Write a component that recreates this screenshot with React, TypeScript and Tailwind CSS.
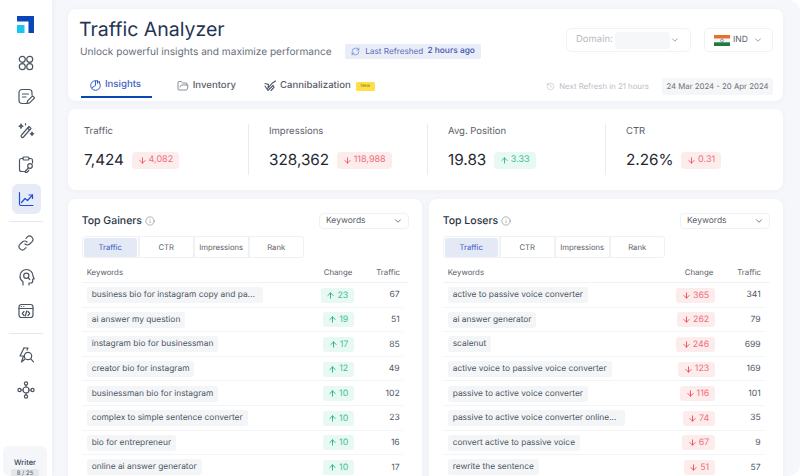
import React from "react";
import { ArrowUp, ArrowDown, ChevronDown, Info, History, RefreshCw, FolderOpen } from "lucide-react";

const S = ({ children, c = "#4b5563", w = 1.2, size = 20 }: { children: React.ReactNode; c?: string; w?: number; size?: number }) => (
  <svg width={size} height={size} viewBox="0 0 20 20" fill="none" stroke={c} strokeWidth={w} strokeLinecap="round" strokeLinejoin="round">
    {children}
  </svg>
);

const Logo = () => (
  <svg width="17" height="17" viewBox="0 0 17 17">
    <path d="M0 0H17V17H11.5V5.5H0Z" fill="#0b46b8" />
    <rect x="0" y="9" width="7.5" height="8" fill="#15c8f2" />
  </svg>
);

const navA = [
  <S key="a"><circle cx="6.3" cy="6.3" r="3" /><circle cx="13.7" cy="6.3" r="3" /><circle cx="6.3" cy="13.7" r="3" /><circle cx="13.7" cy="13.7" r="3" /></S>,
  <S key="b"><path d="M11 16.5H6a3 3 0 0 1-3-3v-8a3 3 0 0 1 3-3h7a3 3 0 0 1 3 3v2.5" /><path d="M6.5 7h6M6.5 10h3.5" /><path d="M11 16.5l.6-2.6 5-5 2 2-5 5z" /></S>,
  <S key="c"><path d="M13 5.5l2 2L7.5 16a1.4 1.4 0 0 1-2-2z" /><path d="M11.5 7l2 2" /><path d="M5 3l.6 1.6L7 5.2l-1.4.6L5 7.4l-.6-1.6L3 5.2l1.4-.6zM16 11l.5 1.3 1.3.5-1.3.5-.5 1.3-.5-1.3-1.3-.5 1.3-.5zM9.5 2.5v1.5" /></S>,
  <S key="d"><path d="M7 3.5H5.5a2 2 0 0 0-2 2v9a2 2 0 0 0 2 2H9" /><path d="M13 3.5h1.5a2 2 0 0 1 2 2V8" /><rect x="7" y="2" width="6" height="3" rx="1" /><circle cx="14" cy="11" r="2.3" /><path d="M12.5 12.8L9.5 16l-.1 1.5H11l.4-1 1-.4.4-1" /></S>,
];
const navB = [
  <S key="e"><path d="M9 11a3.3 3.3 0 0 0 4.7 0l2.2-2.2a3.3 3.3 0 0 0-4.7-4.7l-1.2 1.2" /><path d="M11 9a3.3 3.3 0 0 0-4.7 0L4.1 11.2a3.3 3.3 0 0 0 4.7 4.7l1.2-1.2" /></S>,
  <S key="f"><path d="M7 18v-3.2A6.7 6.7 0 0 1 4 9a6.5 6.5 0 0 1 13 0l1.2 3h-1.5v2a2 2 0 0 1-2 2H13v2" /><circle cx="10.3" cy="8.8" r="2.6" /><path d="M12.2 10.8l1.6 1.7" /></S>,
  <S key="g"><rect x="3" y="3.5" width="14" height="13" rx="2.5" /><path d="M3 7.5h14M5.4 5.5h.1M7.8 5.5h.1" /><path d="M8 10.5L6.3 12.5l1.7 2M12 10.5l1.7 2-1.7 2M10.7 10l-1.4 5" /></S>,
];
const navC = [
  <S key="h"><path d="M8 2L4 10h3.5l-2 6 3-2.5" /><path d="M8 2h4l-1 2" /><circle cx="12" cy="10" r="3.7" /><path d="M14.8 12.8l2.7 3" /></S>,
  <S key="i"><circle cx="10" cy="10" r="3" /><circle cx="10" cy="3.5" r="1.6" /><circle cx="10" cy="16.5" r="1.6" /><circle cx="3.5" cy="10" r="1.6" /><circle cx="16.5" cy="10" r="1.6" /><path d="M10 5.1V7M10 13v1.9M5.1 10H7M13 10h1.9" /></S>,
];

const NavItem = ({ children }: { children: React.ReactNode }) => (
  <div className="w-[29px] h-[30px] shrink-0 flex items-center justify-center">{children}</div>
);

const Sidebar = () => (
  <aside className="w-[52px] shrink-0 bg-white flex flex-col items-center shadow-[1px_0_4px_rgba(30,50,100,0.05)] overflow-hidden">
    <div className="mt-[16px] h-[17px] shrink-0 mr-[1px]"><Logo /></div>
    <div className="mt-[15px] shrink-0 flex flex-col gap-[4px] items-center">{navA.map((n, i) => <NavItem key={i}>{n}</NavItem>)}</div>
    <div className="mt-[4px] shrink-0 w-[29px] h-[30px] rounded-[6px] bg-[#e6ebf7] flex items-center justify-center">
      <S c="#1d4ed8"><path d="M3.5 3.5v11.5a1.5 1.5 0 0 0 1.5 1.5h12" /><path d="M5.5 13.5l3.5-4 2.5 2 5-5.5" /><path d="M13 6h3.5v3.5" /></S>
    </div>
    <div className="mt-[7px] shrink-0 w-[34px] h-px bg-[#e5e7eb]" />
    <div className="mt-[6px] shrink-0 flex flex-col gap-[4px] items-center">{navB.map((n, i) => <NavItem key={i}>{n}</NavItem>)}</div>
    <div className="mt-[7px] shrink-0 w-[34px] h-px bg-[#e5e7eb]" />
    <div className="mt-[7px] shrink-0 flex flex-col gap-[4px] items-center">{navC.map((n, i) => <NavItem key={i}>{n}</NavItem>)}</div>
    <div className="mt-[41px] w-[44px] ml-[-2px] h-[60px] shrink-0 rounded-[6px] bg-[#f4f6fa] flex flex-col items-center pt-[12px]">
      <span className="text-[7.5px] leading-[10px] font-medium text-[#374151]">Writer</span>
      <span className="mt-[1px] px-[6px] h-[10px] rounded-[2px] bg-[#e5e7eb] text-[6px] leading-[10px] text-[#4b5563]">8 / 25</span>
    </div>
  </aside>
);

const Badge = ({ up, v }: { up?: boolean; v: string }) => (
  <span className={`inline-flex items-center rounded-[4px] h-[17px] gap-[2px] px-[6px] text-[9px] ${up ? "bg-[#e8f8f2] text-[#3fbf97]" : "bg-[#fdecec] text-[#ee6f7c]"}`}>
    {up ? <ArrowUp size={9} strokeWidth={2.2} color="#14b07f" /> : <ArrowDown size={9} strokeWidth={2.2} color="#ef4458" />}
    {v}
  </span>
);

const Metric = ({ label, value, up, delta, cls, border = true }: { label: string; value: string; up?: boolean; delta: string; cls: string; border?: boolean }) => (
  <div className={`${cls} ${border ? "border-r border-[#e9ebef]" : ""} h-[51px] flex flex-col`}>
    <div className="mt-[1px] text-[9.5px] leading-[14px] text-[#5b6068]">{label}</div>
    <div className="flex items-center gap-[7.5px] mt-[11px]">
      <span className="text-[15.3px] leading-[20px] text-[#1f2733]">{value}</span>
      <Badge up={up} v={delta} />
    </div>
  </div>
);

type Row = [string, string, string];
const gain: Row[] = [
  ["business bio for instagram copy and pa...", "23", "67"],
  ["ai answer my question", "19", "51"],
  ["instagram bio for businessman", "17", "85"],
  ["creator bio for instagram", "12", "49"],
  ["businessman bio for instagram", "10", "102"],
  ["complex to simple sentence converter", "10", "23"],
  ["bio for entrepreneur", "10", "16"],
  ["online ai answer generator", "10", "17"],
];
const lose: Row[] = [
  ["active to passive voice converter", "365", "341"],
  ["ai answer generator", "262", "79"],
  ["scalenut", "246", "699"],
  ["active voice to passive voice converter", "123", "169"],
  ["passive to active voice converter", "116", "101"],
  ["passive to active voice converter online...", "74", "35"],
  ["convert active to passive voice", "67", "9"],
  ["rewrite the sentence", "51", "57"],
];

const Panel = ({ title, rows, up }: { title: string; rows: Row[]; up?: boolean }) => (
  <section className="w-[354px] bg-white rounded-t-[8px] shadow-[0_1px_6px_rgba(30,50,100,0.04)] pl-[13.7px] pr-[13px] pt-[12px]">
    <div className="flex items-center justify-between h-[19px]">
      <div className="flex items-center gap-[3px] text-[#2a3344] text-[10.5px] font-medium">
        {title}
        <Info size={10} strokeWidth={1.3} color="#6b7280" />
      </div>
      <div className="w-[90px] h-[16px] rounded-[4px] border border-[#f0f1f4] flex items-center justify-between pl-[6px] pr-[5px] text-[8.5px] leading-[15px] text-[#5b6068]">
        <span className="pt-[1px]">Keywords</span>
        <ChevronDown size={10} strokeWidth={1.8} color="#4b5563" />
      </div>
    </div>
    <div className="mt-[6px] w-[222px] h-[22px] border border-[#f0f1f4] rounded-[3px] grid grid-cols-4 text-[7.7px] text-[#5b6068] text-center">
      <div className="m-[1px] rounded-[2px] bg-[#e4e9f6] text-[#3b5cc4] leading-[19px]">Traffic</div>
      <div className="border-l-2 border-[#f0f1f4] leading-[21px]">CTR</div>
      <div className="border-l-2 border-[#f0f1f4] leading-[21px]">Impressions</div>
      <div className="border-l-2 border-[#f0f1f4] leading-[21px]">Rank</div>
    </div>
    <div className="h-[25px] flex items-center pt-[5px] text-[7.8px] text-[#5b6068] border-b border-[#f0f1f4] pl-[5px] pr-[9px]">
      <span className="flex-1">Keywords</span>
      <span className="w-[46px] text-center mr-[7px]">Change</span>
      <span className="w-[32px] text-right">Traffic</span>
    </div>
    <div className="mr-[6.3px]">
      {rows.map((r) => (
        <div key={r[0]} className="h-[24.6px] flex items-center border-b border-[#f3f4f6] pt-[1px] pl-[5px] pr-[3px]">
          <div className="flex-1 min-w-0 flex items-center">
            <span className={`h-[16px] leading-[17px] pl-[5px] ${r[0].endsWith("...") ? "pr-[8.5px]" : "pr-[5px]"} rounded-[3px] bg-[#f4f5f7] text-[8.4px] text-[#4b5563] whitespace-nowrap`}>{r[0]}</span>
          </div>
          <div className="mr-[14px] flex justify-end">
            <span className={`inline-flex items-center justify-center gap-[2px] rounded-[3px] h-[15px] px-[5.5px] text-[8.8px] ${up ? "bg-[#e8f8f2] text-[#3fbf97]" : "bg-[#fdecec] text-[#ee6f7c]"}`}>
              {up ? <ArrowUp size={9} strokeWidth={2.4} color="#14b07f" /> : <ArrowDown size={9} strokeWidth={2.4} color="#ef4458" />}
              {r[1]}
            </span>
          </div>
          <span className="w-[32px] pt-[1px] text-right text-[8.6px] text-[#4b5563]">{r[2]}</span>
        </div>
      ))}
    </div>
  </section>
);

export default function App() {
  return (
    <div className="w-[800px] h-[476px] overflow-hidden bg-white [text-rendering:geometricPrecision] antialiased" style={{ fontFamily: "Inter, sans-serif" }}>
      <div className="w-full h-full rounded-[12px] overflow-hidden bg-[#f5f7fb] flex">
        <Sidebar />
        <main className="ml-[16px] w-[715px] pt-[9px] flex flex-col">
          <header className="h-[92px] shrink-0 bg-white rounded-[8px] shadow-[0_1px_6px_rgba(30,50,100,0.04)] pl-[10px] pr-[10px] flex flex-col">
            <div className="flex items-start justify-between">
              <div>
                <h1 className="text-[19.5px] leading-[24px] text-[#233552] mt-[8px] ml-[1px]">Traffic Analyzer</h1>
                <div className="flex items-center mt-[3px]">
                  <span className="text-[10.15px] leading-[14px] text-[#686f7a] ml-[2px]">Unlock powerful insights and maximize performance</span>
                  <span className="ml-[13px] h-[15px] w-[136px] pl-[6.5px] rounded-[2px] bg-[#e9edf8] flex items-center gap-[4px] text-[8.2px] text-[#5d6cb8] whitespace-nowrap">
                    <RefreshCw size={9} strokeWidth={1.6} color="#4f6fc4" />
                    <span className="ml-[1px]">Last Refreshed</span>
                    <span className="font-medium text-[8.4px] text-[#3f52ad]">2 hours ago</span>
                  </span>
                </div>
              </div>
              <div className="flex items-center gap-[13px] mt-[19px]">
                <div className="w-[125px] h-[24px] rounded-[5px] border border-[#f1f2f5] flex items-center pl-[9px] pr-[10px] text-[9.5px] text-[#b6bac2]">
                  Domain:
                  <span className="ml-[2px] w-[58px] h-[17px] rounded-[3px] bg-[#f6f7f8]" />
                  <ChevronDown size={10} strokeWidth={1.6} color="#6b7280" className="ml-auto" />
                </div>
                <div className="w-[69px] h-[24px] rounded-[5px] border border-[#f1f2f5] flex items-center pl-[9px] pr-[9px] text-[8.5px] text-[#5b6068]">
                  <svg width="16" height="11" viewBox="0 0 16 11" className="shrink-0">
                    <rect width="16" height="3.7" fill="#e8702f" />
                    <rect y="3.7" width="16" height="3.6" fill="#f5f5f5" />
                    <rect y="7.3" width="16" height="3.7" fill="#1f7a3d" />
                    <circle cx="8" cy="5.5" r="1.4" fill="none" stroke="#3b4a8c" strokeWidth="0.5" />
                  </svg>
                  <span className="ml-[3px]">IND</span>
                  <ChevronDown size={10} strokeWidth={1.6} color="#6b7280" className="ml-auto" />
                </div>
              </div>
            </div>
            <div className="flex items-end justify-between mt-[13px]">
              <nav className="flex items-start text-[9.6px] font-medium text-[#5a606b] ml-[2.7px] h-[26px]">
                <div className="w-[71px] h-[26px] border-b-[2px] border-[#0b46b8] flex items-center pt-[2px] pl-[9.3px] gap-[3px] text-[#3f62c0]">
                  <svg width="12" height="12" viewBox="0 0 12 12" fill="none" stroke="#3461c9" strokeWidth="1"><circle cx="5.5" cy="6.5" r="4.8" /><path d="M5.5 6.5V1.7M5.5 6.5L1.5 9M7.5 1.2v3.5M9.5 2.2v2.5" /></svg>
                  Insights
                </div>
                <div className="ml-[25px] h-[26px] flex items-center pt-[3px] pb-[1px] gap-[4px]">
                  <FolderOpen size={12} strokeWidth={1.3} color="#4b5563" />
                  Inventory
                </div>
                <div className="ml-[28px] h-[26px] flex items-center pt-[3px] pb-[1px] gap-[4px]">
                  <svg width="12" height="12" viewBox="0 0 12 12" fill="none" stroke="#4b5563" strokeWidth="1.1" strokeLinecap="round"><path d="M1 3.5l3.5 1L4 8l4.5-5 3-2M1 6l3 4.5L9 5.5l1 2-3 3" /></svg>
                  Cannibalization
                  <span className="ml-[1px] w-[19px] h-[9px] rounded-[1.5px] bg-[#fde047] text-[4.5px] leading-[9px] text-center text-[#a08a1a]">New</span>
                </div>
              </nav>
              <div className="flex items-center mb-[3px] text-[7.8px] whitespace-nowrap">
                <History size={9} strokeWidth={1.4} color="#b4b8c0" />
                <span className="ml-[4px] text-[#b9bdc4]">Next Refresh in 21 hours</span>
                <span className="ml-[13px] h-[17px] w-[111px] bg-[#f5f6f7] rounded-[2px] text-[#6b7078] leading-[17px] text-center">24 Mar 2024 - 20 Apr 2024</span>
              </div>
            </div>
          </header>

          <section className="mt-[8px] h-[81px] shrink-0 bg-white rounded-[8px] shadow-[0_1px_6px_rgba(30,50,100,0.04)] pt-[15px] flex">
            <Metric cls="w-[181px] pl-[16px]" label="Traffic" value="7,424" delta="4,082" />
            <Metric cls="w-[179px] pl-[20px]" label="Impressions" value="328,362" delta="118,988" />
            <Metric cls="w-[178px] pl-[20px]" label="Avg. Position" value="19.83" up delta="3.33" />
            <Metric cls="flex-1 pl-[20px]" border={false} label="CTR" value="2.26%" delta="0.31" />
          </section>

          <div className="mt-[9px] flex gap-[7px]">
            <Panel title="Top Gainers" rows={gain} up />
            <Panel title="Top Losers" rows={lose} />
          </div>
        </main>
      </div>
    </div>
  );
}
